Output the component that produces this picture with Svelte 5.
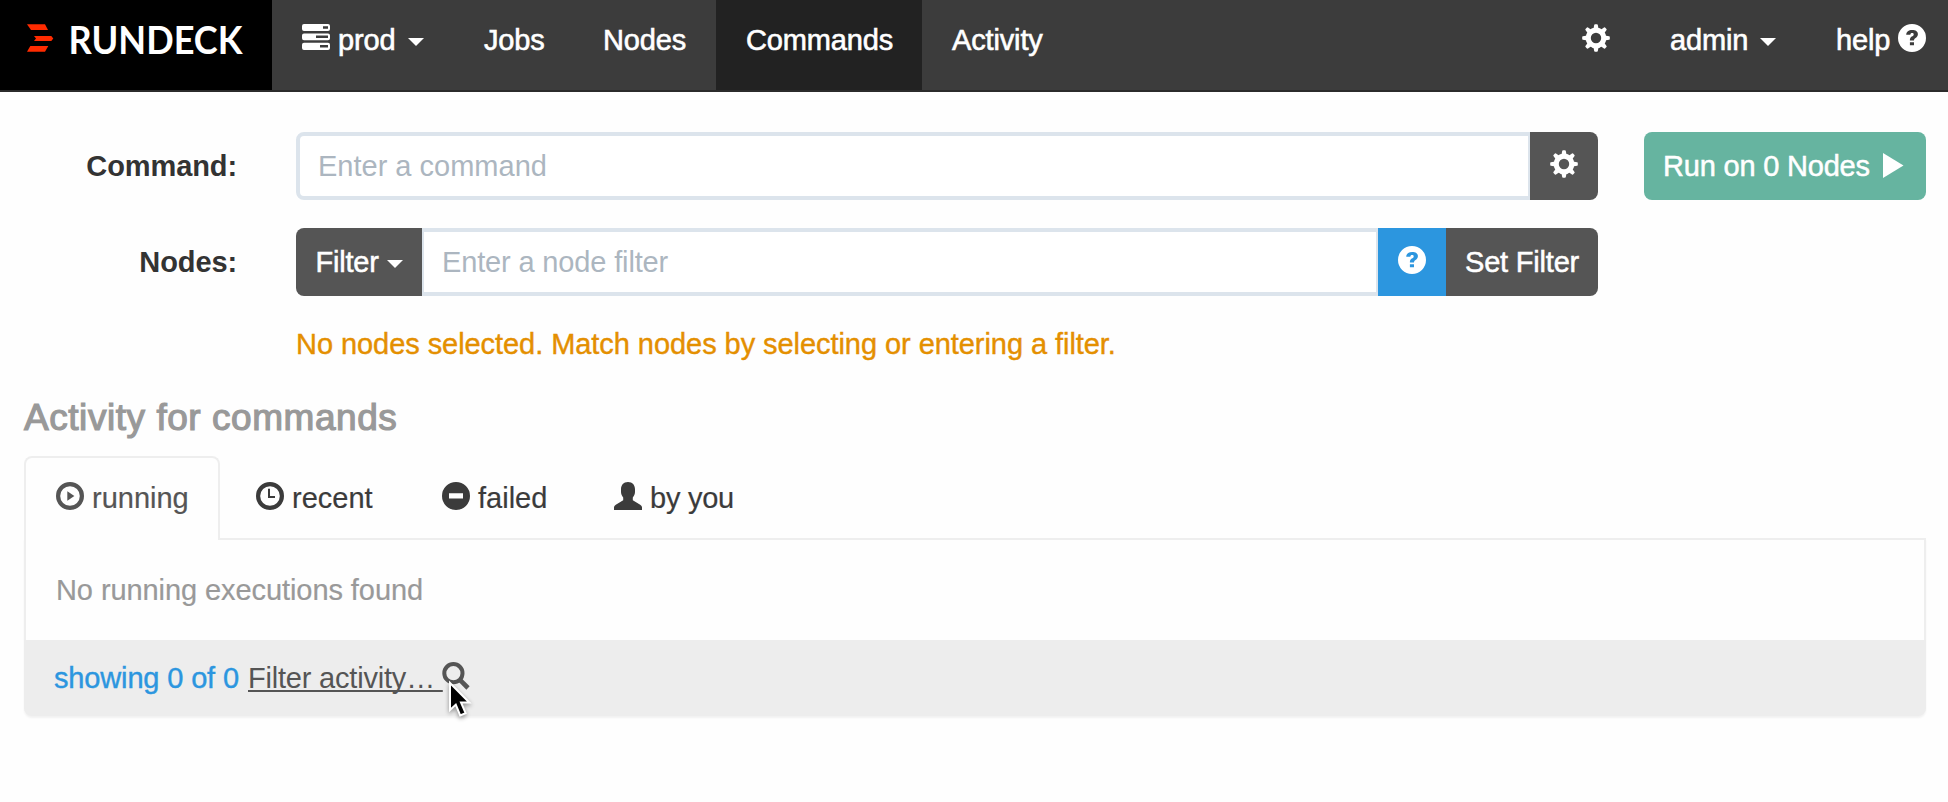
<script>
  const teeth = [0, 45, 90, 135, 180, 225, 270, 315];
  const tabs = [
    { icon: 'play', label: 'running', width: 196, active: true },
    { icon: 'clock', label: 'recent', width: 185 },
    { icon: 'minus', label: 'failed', width: 173 },
    { icon: 'user', label: 'by you', width: 180 }
  ];
</script>

{#snippet icon(name)}
  <svg class="icon" viewBox="0 0 28 28" aria-hidden="true">
    {#if name === 'cog'}
      <circle cx="14" cy="14" r="7.8" fill="none" stroke="currentColor" stroke-width="5.2" />
      {#each teeth as angle}
        <path d="M11.4 5.2 12.2 .9Q12.4.2 13 .2H15Q15.6.2 15.8.9L16.6 5.2Z" fill="currentColor" transform="rotate({angle} 14 14)" />
      {/each}
    {:else if name === 'question'}
      <path fill="currentColor" fill-rule="evenodd" d="M14 0a14 14 0 1 1 0 28 14 14 0 0 1 0-28ZM8.2 10.8H12.3C12.4 9.6 13 9.1 14 9.1c1.1 0 1.7.5 1.7 1.3 0 1-.8 1.4-2 2.2-1.4 1-1.9 2-1.8 4H16c0-1.4.5-1.8 1.6-2.6 1.5-1.1 2.3-2.2 2.3-4 0-2.6-2.3-4.1-5.7-4.1-3.6 0-5.9 1.8-6 4.9ZM11.9 18.2V21.3H16V18.2Z" />
    {:else if name === 'server'}
      <path fill="currentColor" fill-rule="evenodd" d="M2 0H26Q28 0 28 2V5Q28 7 26 7H2Q0 7 0 5V2Q0 0 2 0ZM21 2.2V4.8H26V2.2ZM2 9.4H26Q28 9.4 28 11.4V14.2Q28 16.2 26 16.2H2Q0 16.2 0 14.2V11.4Q0 9.4 2 9.4ZM14 11.6V14H26V11.6ZM2 18.8H26Q28 18.8 28 20.8V24Q28 26 26 26H2Q0 26 0 24V20.8Q0 18.8 2 18.8ZM18 21V23.6H26V21Z" />
    {:else if name === 'play'}
      <circle cx="14" cy="14" r="11.9" fill="none" stroke="currentColor" stroke-width="4.2" />
      <path fill="currentColor" d="M11.3 9.3 18.4 14 11.3 18.7Z" />
    {:else if name === 'clock'}
      <circle cx="14" cy="14" r="11.9" fill="none" stroke="currentColor" stroke-width="4.2" />
      <path fill="none" stroke="currentColor" stroke-width="2" d="M13 6.8V15H19" />
    {:else if name === 'minus'}
      <path fill="currentColor" fill-rule="evenodd" d="M14 0a14 14 0 1 1 0 28 14 14 0 0 1 0-28ZM7 11.2V16.5H21V11.2Z" />
    {:else if name === 'user'}
      <path fill="currentColor" d="M14 0C18.6 0 21 3.2 21 7.3V10C21 12.3 20 14 18.8 15.5V18.3L26.2 22.8Q28 23.9 28 25.2V28H0V25.2Q0 23.9 1.8 22.8L9.2 18.3V15.5C8 14 7 12.3 7 10V7.3C7 3.2 9.4 0 14 0Z" />
    {:else if name === 'triangle'}
      <path fill="currentColor" d="M7 3 27.5 15.6 7 28Z" />
    {:else if name === 'search'}
      <circle cx="11.4" cy="11.2" r="9.1" fill="none" stroke="currentColor" stroke-width="4" />
      <path fill="none" stroke="currentColor" stroke-width="4.6" d="M17.2 17.2 26 26" />
    {/if}
  </svg>
{/snippet}

<div class="page">
  <nav>
    <a class="brand" href="#home">
      <svg width="272" height="90" viewBox="0 0 272 90">
        <g fill="#ff2b00">
          <path d="M27 24.3H45L48 30H31Z" />
          <path d="M34 36H51.3L53.3 38.5 51.3 41H34L36 38.5Z" />
          <path d="M30.3 46H48.3L45 51.8H27Z" />
        </g>
        <text x="68.5" y="54" textLength="174" lengthAdjust="spacingAndGlyphs">RUNDECK</text>
      </svg>
    </a>
    <a class="link project" href="#prod">{@render icon('server')}<span>prod</span><i class="caret"></i></a>
    <a class="link jobs" href="#jobs">Jobs</a>
    <a class="link nodes" href="#nodes">Nodes</a>
    <a class="link commands" href="#commands">Commands</a>
    <a class="link activity" href="#activity">Activity</a>
    <div class="right">
      <a class="link" href="#settings">{@render icon('cog')}</a>
      <a class="link admin" href="#admin"><span>admin</span><i class="caret"></i></a>
      <a class="link help" href="#help"><span>help</span>{@render icon('question')}</a>
    </div>
  </nav>

  <form>
    <div class="row">
      <label for="command">Command:</label>
      <div class="group">
        <input id="command" placeholder="Enter a command" />
        <button type="button" class="square">{@render icon('cog')}</button>
      </div>
      <button type="button" class="run"><span>Run on 0 Nodes</span>{@render icon('triangle')}</button>
    </div>
    <div class="row">
      <label for="filter">Nodes:</label>
      <div class="group">
        <button type="button" class="filter"><span>Filter</span><i class="caret"></i></button>
        <input id="filter" class="middle" placeholder="Enter a node filter" />
        <button type="button" class="square info">{@render icon('question')}</button>
        <button type="button" class="set">Set Filter</button>
      </div>
    </div>
  </form>
  <p class="warning">No nodes selected. Match nodes by selecting or entering a filter.</p>

  <section>
    <h4>Activity for commands</h4>
    <div class="tabs">
      {#each tabs as tab}
        <a class="tab" class:active={tab.active} href="#{tab.icon}" style="width: {tab.width}px">
          {@render icon(tab.icon)}<span>{tab.label}</span>
        </a>
      {/each}
    </div>
    <div class="panel">
      <div class="body">No running executions found</div>
      <footer>
        <span class="count">showing 0 of 0</span>
        <a class="filter-link" href="#filter-activity">Filter activity…&nbsp;</a>
        <span class="search">
          {@render icon('search')}
          <svg class="pointer" width="30" height="42" viewBox="0 0 30 42">
            <path d="M3 3V30L8.8 24.6 13.2 35.4 18.6 33.1 14 22.5H22.3Z" fill="#000" stroke="#fff" stroke-width="2" />
          </svg>
        </span>
      </footer>
    </div>
  </section>
</div>

<style>
  :global(body) { margin: 0; background: #fefefe; }
  .page {
    height: 802px;
    overflow: hidden;
    background: #fefefe;
    font: 29px/40px "Liberation Sans", Arial, sans-serif;
    color: #333;
  }
  .page * { box-sizing: border-box; }
  a { color: inherit; text-decoration: none; }
  .icon { width: 28px; height: 28px; flex: none; margin-bottom: 4px; display: block; }
  .caret { width: 0; height: 0; border: solid transparent; border-width: 8px 8px 0; border-top-color: currentColor; flex: none; margin-top: 4px; }

  nav { display: flex; height: 92px; background: #3c3c3c; border-bottom: 2px solid #2b2b2b; color: #fff; }
  .brand { width: 272px; height: 90px; background: #000; }
  .brand svg { display: block; }
  .brand text { font: bold 39px Lato, sans-serif; fill: #fff; }
  .link { display: flex; align-items: center; height: 90px; padding: 0 0 10px 30px; letter-spacing: -.15px; -webkit-text-stroke: .6px currentColor; }
  .project { width: 182px; }
  .project span { width: 70px; margin-left: 8px; }
  .jobs { width: 119px; }
  .nodes { width: 143px; }
  .commands { width: 206px; background: #222; }
  .right { display: flex; margin-left: auto; padding-right: 22px; }
  .admin { margin-left: 30px; width: 136px; }
  .admin span { width: 91px; }
  .help { margin-left: 30px; }
  .help span { width: 62px; }

  form { padding: 40px 22px 0 24px; display: flex; flex-direction: column; gap: 28px; }
  .row { display: flex; height: 68px; align-items: center; }
  label { width: 213px; margin-right: 59px; text-align: right; font-weight: bold; letter-spacing: -.1px; }
  .group { display: flex; width: 1302px; height: 68px; }
  input, button { font: inherit; letter-spacing: inherit; height: 68px; outline: 0; }
  input { flex: 1; min-width: 0; padding: 0 18px; border: 4px solid #dce4ec; border-right-width: 2px; border-radius: 8px 0 0 8px; background: #fff; }
  input.middle { border-left-width: 2px; border-radius: 0; letter-spacing: -.15px; }
  input::placeholder { color: #acb6c0; opacity: 1; }
  button { display: flex; align-items: center; justify-content: center; border: 0; padding: 0; background: #555; color: #fff; border-radius: 0 8px 8px 0; letter-spacing: -.2px; -webkit-text-stroke: .5px currentColor; }
  .square { width: 68px; }
  .info { background: #2c96df; border-radius: 0; }
  .filter { width: 126px; border-radius: 8px 0 0 8px; }
  .filter span { margin-right: 8px; }
  .set { width: 152px; }
  .run { width: 282px; margin-left: 46px; border-radius: 8px; background: #66b4a0; justify-content: flex-start; padding-left: 19px; }
  .run span { width: 213px; text-align: left; }

  .warning { margin: 28px 0 0 296px; color: #e48f00; white-space: nowrap; letter-spacing: -.06px; -webkit-text-stroke: .4px currentColor; }
  section { margin: 34px 22px 0 24px; }
  h4 { margin: 0; font-size: 37px; font-weight: 400; letter-spacing: .55px; line-height: 40px; color: #999; -webkit-text-stroke: 1.2px currentColor; }
  .tabs { display: flex; margin-top: 18px; height: 84px; }
  .tab { display: flex; align-items: center; height: 84px; padding: 0 0 0 32px; color: #3b3b3b; -webkit-text-stroke: .2px currentColor; }
  .tab span { margin-left: 8px; }
  .tab + .tab { padding-left: 36px; }
  .tab + .tab + .tab { padding-left: 37px; }
  .tab + .tab + .tab + .tab { padding-left: 36px; letter-spacing: -.25px; }
  .active { position: relative; padding: 0 0 2px 30px; border: 2px solid #eee; border-bottom: 0; border-radius: 8px 8px 0 0; background: #fefefe; color: #555; }
  .panel { margin-top: -2px; border: 2px solid #eee; border-radius: 0 0 8px 8px; box-shadow: 0 2px 2px rgba(0, 0, 0, .05); }
  .body { height: 100px; padding: 30px; color: #999; letter-spacing: -.08px; -webkit-text-stroke: .2px currentColor; }
  footer { display: flex; align-items: center; height: 76px; margin: 0 -2px -2px; padding-left: 30px; background: #ededed; border-radius: 0 0 8px 8px; color: #555; }
  .count { width: 194px; color: #2c96df; letter-spacing: -.15px; -webkit-text-stroke: .4px currentColor; }
  .filter-link { width: 194px; white-space: nowrap; letter-spacing: -.2px; text-decoration: underline; text-decoration-thickness: 2px; text-underline-offset: 2px; text-decoration-skip-ink: none; }
  .search { position: relative; }
  .pointer { position: absolute; left: 5px; top: 18px; filter: drop-shadow(0 2px 2px rgba(0, 0, 0, .4)); }
</style>
